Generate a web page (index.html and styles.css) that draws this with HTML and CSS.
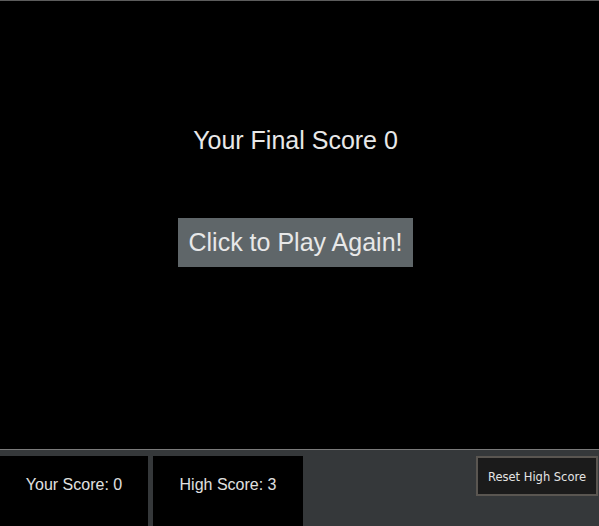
FILE: index.html
```html
<!DOCTYPE html>
<html>
<head>
<meta charset="utf-8">
<link rel="stylesheet" href="styles.css">
</head>
<body>
<div class="game">
  <div class="final">Your Final Score 0</div>
  <button class="play">Click to Play Again!</button>
</div>
<div class="footer">
  <div class="score">Your Score: 0</div>
  <div class="score">High Score: 3</div>
  <button class="reset">Reset High Score</button>
</div>
</body>
</html>
```
FILE: styles.css
```css
html, body {
  margin: 0;
  padding: 0;
  background: #35383a;
  height: 526px;
  overflow: hidden;
}
body {
  font-family: "Liberation Sans", Arial, sans-serif;
}
.game {
  height: 448px;
  background: #000;
  border-top: 1px solid #5c5c5c;
  border-bottom: 1px solid #7a7a7a;
  display: flex;
  flex-direction: column;
  align-items: center;
  padding-right: 8px;
  box-sizing: content-box;
}
.final {
  margin-top: 124px;
  font-size: 25px;
  color: #e8e8e8;
  line-height: 30px;
}
.play {
  margin-top: 63px;
  width: 235px;
  height: 49px;
  background: #5f6669;
  border: none;
  color: #e8e8e8;
  font-family: "Liberation Sans", Arial, sans-serif;
  font-size: 25px;
  padding: 0;
}
.footer {
  display: flex;
  align-items: flex-start;
  gap: 5px;
  padding-top: 6px;
  height: 70px;
}
.score {
  width: 148px;
  height: 70px;
  box-sizing: border-box;
  padding-top: 20px;
  line-height: 18px;
  background: #000;
  color: #e0e0e0;
  font-size: 16px;
  text-align: center;
}
.score + .score {
  width: 150px;
}
.reset {
  margin-left: auto;
  margin-right: 1px;
  margin-top: 0;
  width: 122px;
  height: 40px;
  background: #1b1b1b;
  border: 2px solid #5a5651;
  color: #e4e4e4;
  font-family: "DejaVu Sans", Verdana, sans-serif;
  font-size: 11.5px;
  padding: 2px 0 0 0;
}
```
